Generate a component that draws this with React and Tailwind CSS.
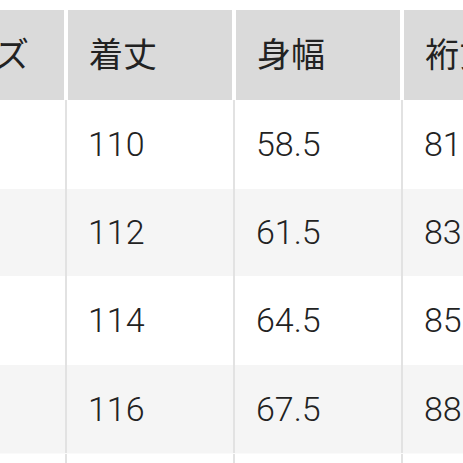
export default function App() {
  const rows = [
    { s: "S", a: "110", b: "58.5", c: "81" },
    { s: "M", a: "112", b: "61.5", c: "83" },
    { s: "L", a: "114", b: "64.5", c: "85" },
    { s: "XL", a: "116", b: "67.5", c: "88" },
  ];
  const bodyBg = ["bg-white", "bg-[#f5f5f5]", "bg-white", "bg-[#f5f5f5]"];
  const heights = ["h-[89px]", "h-[87px]", "h-[89px]", "h-[88px]"];
  return (
    <div
      className="w-[463px] h-[463px] overflow-hidden bg-white text-[#222]"
      style={{ fontFamily: 'Roboto, "Noto Sans CJK JP", sans-serif' }}
    >
      <div className="ml-[-93px] w-[720px] pt-[10px]">
        <div className="flex h-[90px]">
          {["サイズ", "着丈", "身幅", "裄丈"].map((t, i) => (
            <div
              key={i}
              className={`${i === 0 ? "w-[157px]" : "w-[164px]"} shrink-0 bg-[#dadada] flex items-center pl-[21px] text-[34px] mr-[4px]`}
            >
              {t}
            </div>
          ))}
        </div>
        {rows.map((r, ri) => (
          <div key={ri} className={`flex ${heights[ri]} ${bodyBg[ri]}`}>
            {[r.s, r.a, r.b, r.c].map((t, i) => (
              <div
                key={i}
                className={`${i === 0 ? "w-[160px]" : "w-[168px]"} shrink-0 flex items-center pl-[21px] text-[34px] font-light border-r-2 border-[#e2e2e2]`}
              >
                {t}
              </div>
            ))}
          </div>
        ))}
        <div className="flex h-[20px] bg-white border-t border-[#fafafa]">
          {[0, 1, 2, 3].map((i) => (
            <div
              key={i}
              className={`${i === 0 ? "w-[160px]" : "w-[168px]"} shrink-0 border-r-2 border-[#e2e2e2]`}
            />
          ))}
        </div>
      </div>
    </div>
  );
}
